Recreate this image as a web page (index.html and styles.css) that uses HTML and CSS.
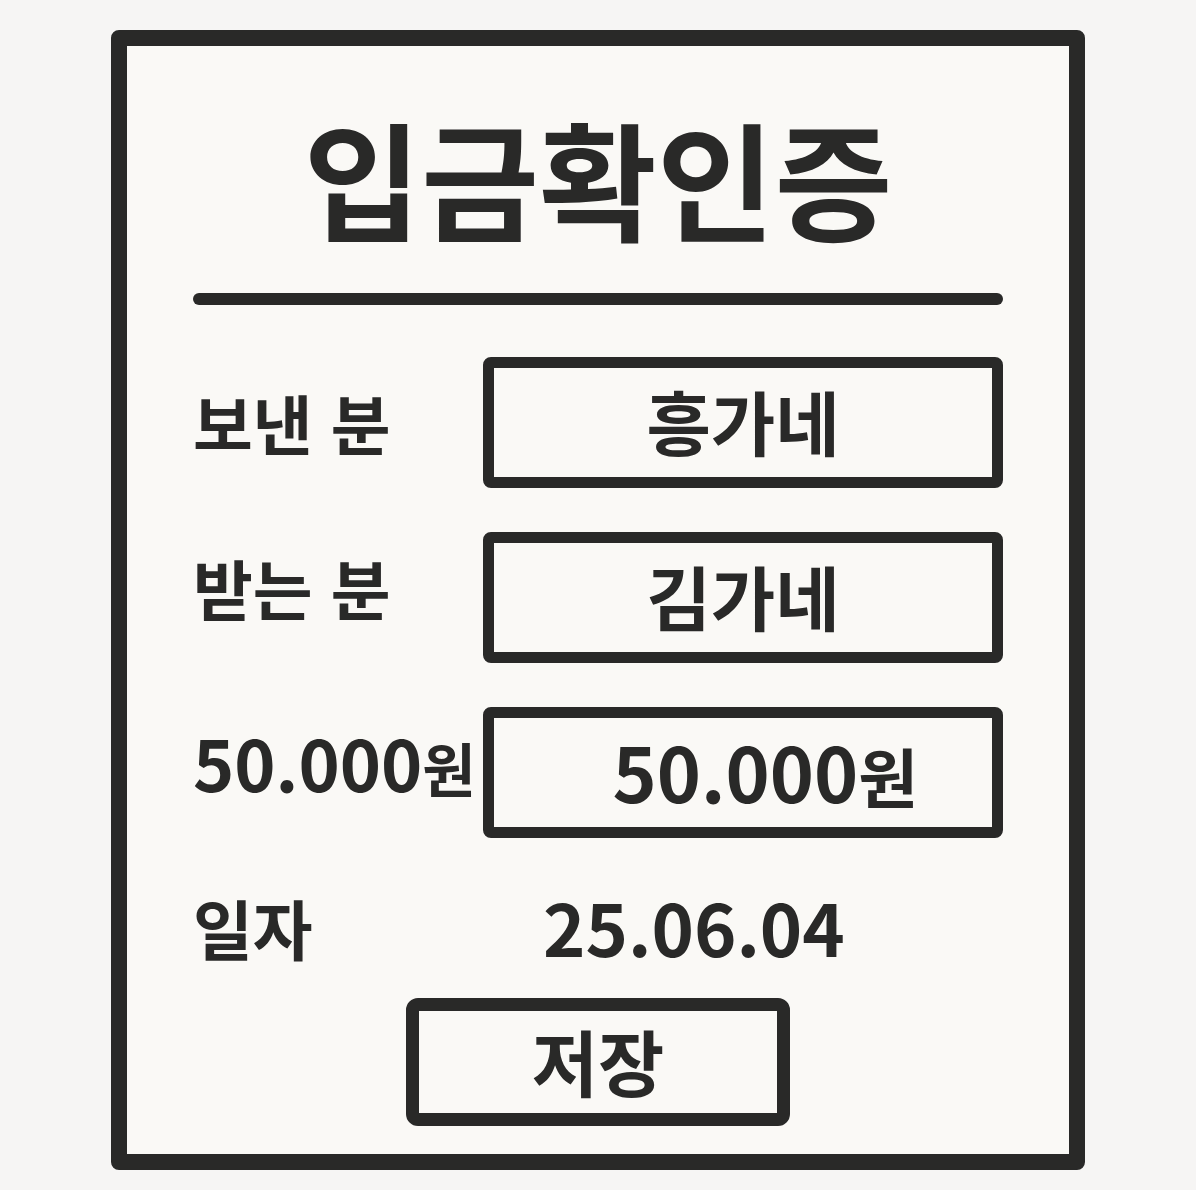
FILE: index.html
```html
<!DOCTYPE html>
<html lang="ko">
<head>
<meta charset="utf-8">
<meta name="viewport" content="width=device-width, initial-scale=1">
<title>입금확인증</title>
<link rel="stylesheet" href="styles.css">
</head>
<body>
<form class="receipt">
  <h1 class="title">입금확인증</h1>
  <hr class="rule">
  <div class="fields">
    <label class="label" for="sender">보낸 분</label>
    <input class="box" id="sender" type="text" value="흥가네">
    <label class="label label-high" for="receiver">받는 분</label>
    <input class="box" id="receiver" type="text" value="김가네">
    <label class="label label-high label-amount" for="amount">50.000<span class="label-unit">원</span></label>
    <div class="box box-amount">
      <input class="amount" id="amount" type="text" value="50.000">
      <span class="unit">원</span>
    </div>
  </div>
  <div class="date-row">
    <span class="label">일자</span>
    <time class="date" datetime="2025-06-04">25.06.04</time>
  </div>
  <button class="save" type="button">저장</button>
</form>
</body>
</html>
```
FILE: styles.css
```css
* {
  box-sizing: border-box;
}

body {
  margin: 0;
  padding: 30px 111px 20px;
  background: #f6f5f4;
  color: #292928;
  font-family: "Noto Sans CJK KR", sans-serif;
  font-weight: 700;
}

.receipt {
  display: flex;
  flex-direction: column;
  padding: 56px 66px 28px;
  border: 16px solid #292928;
  border-radius: 8px;
  background: #faf9f6;
}

.title {
  margin: 0;
  font-size: 128px;
  line-height: 150px;
  font-weight: 700;
  text-align: center;
}

.rule {
  width: 100%;
  height: 12px;
  margin: 41px 0 52px;
  border: 0;
  border-radius: 6px;
  background: #292928;
}

.fields {
  display: grid;
  grid-template-columns: 290px minmax(0, 1fr);
  row-gap: 44px;
}

.label {
  font-size: 65px;
  line-height: 130px;
  white-space: nowrap;
}

.label-high {
  line-height: 110px;
}

.label-amount {
  font-size: 70px;
}

.label-unit {
  font-size: 58px;
}

.box,
.save {
  border: 11px solid #292928;
  border-radius: 8px;
  background: #faf9f6;
  color: inherit;
  font: inherit;
  text-align: center;
}

.box {
  width: 100%;
  height: 131px;
  padding: 0 0 4px;
  font-size: 70px;
}

.box-amount {
  display: flex;
  align-items: baseline;
  padding: 0 74px 0 0;
}

.amount {
  flex: 1;
  min-width: 0;
  height: 105px;
  padding: 0;
  border: 0;
  background: transparent;
  color: inherit;
  font: inherit;
  font-size: 75px;
  text-align: right;
}

.unit {
  font-size: 65px;
  line-height: 100px;
}

.date-row {
  display: grid;
  grid-template-columns: 350px minmax(0, 1fr);
  margin-top: 24px;
}

.date {
  font-size: 72px;
  line-height: 128px;
}

.save {
  align-self: center;
  width: 384px;
  height: 128px;
  margin-top: 6px;
  padding: 0 0 4px;
  border-width: 13px;
  border-radius: 12px;
  font-size: 72px;
  line-height: 96px;
}
```
